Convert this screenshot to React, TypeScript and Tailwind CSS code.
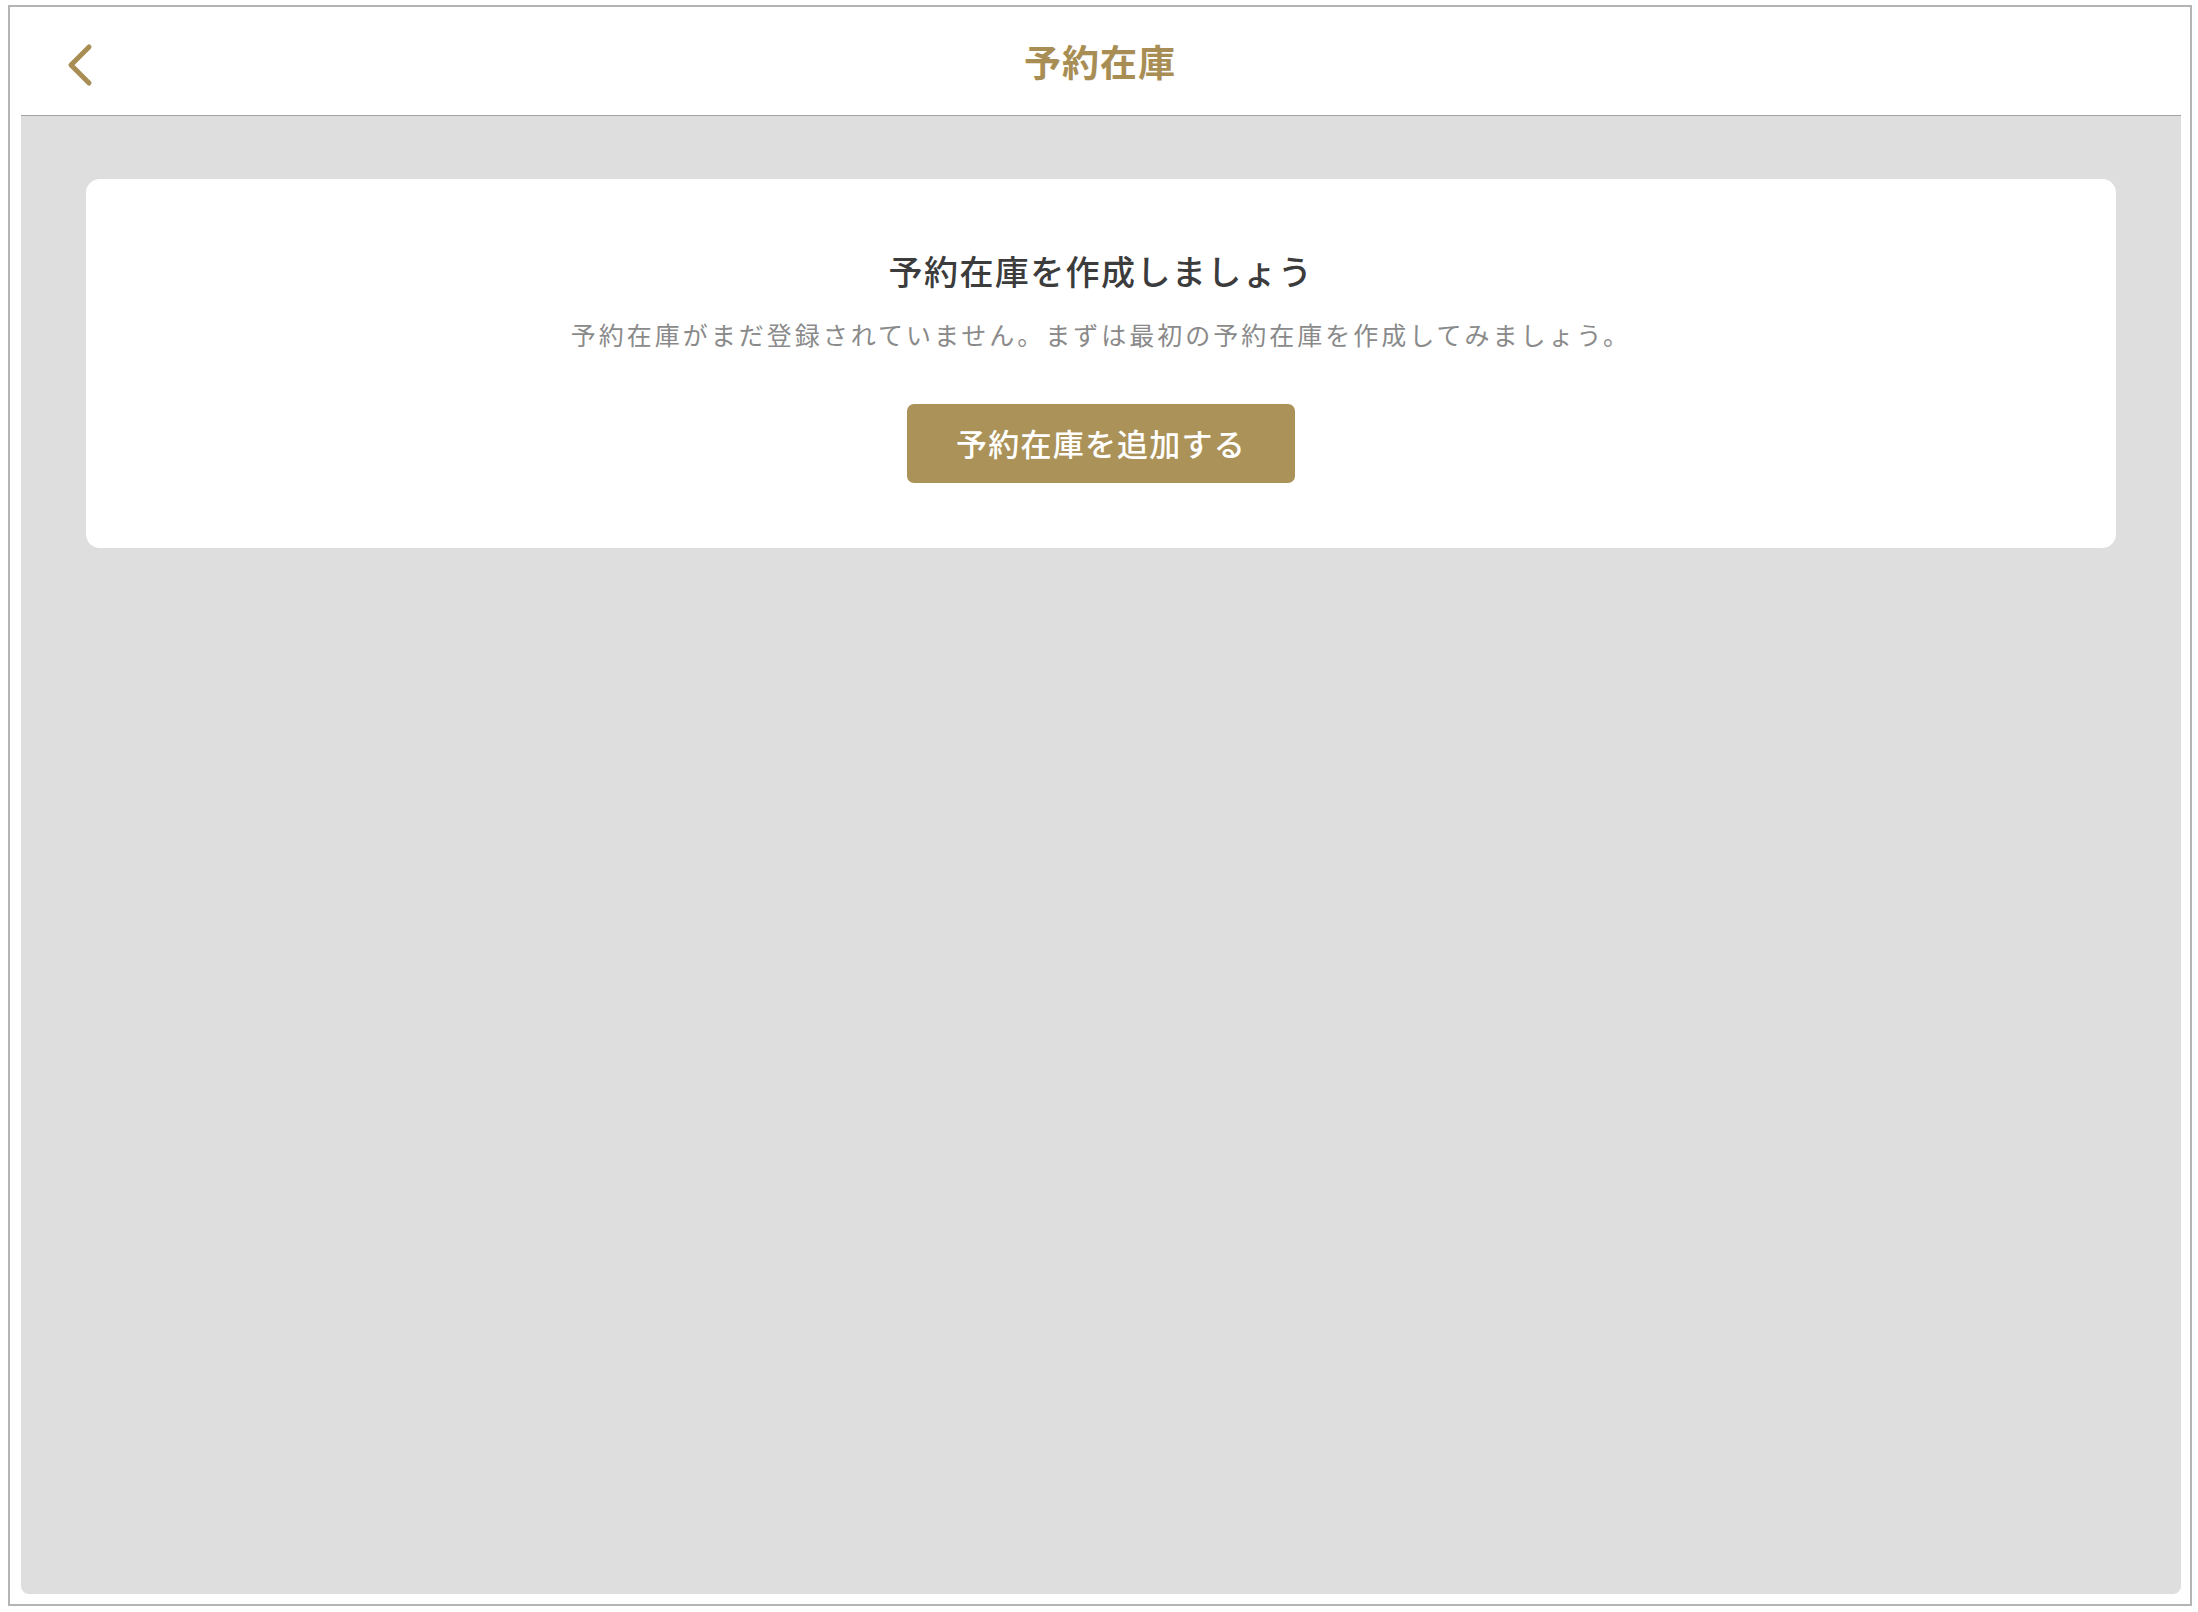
import React from "react";

const font = { fontFamily: '"Noto Sans CJK JP", "Noto Sans", sans-serif' };

export default function App() {
  return (
    <div className="w-[2198px] h-[1612px] bg-white pt-[5px] pl-[8px]" style={font}>
      <div className="w-[2184px] h-[1601px] border-2 border-[#b4b4b4] bg-white flex flex-col">
        {/* header */}
        <div className="relative h-[108px] shrink-0 flex items-center justify-center">
          <button className="absolute left-[55px] top-[36px] w-[30px] h-[44px] flex items-center justify-center">
            <svg width="30" height="44" viewBox="0 0 30 44" fill="none">
              <polyline
                points="24,4 6,22 24,40"
                stroke="#a88e55"
                strokeWidth="5"
                strokeLinecap="round"
                strokeLinejoin="round"
              />
            </svg>
          </button>
          <h1 className="text-[37px] font-bold text-[#a88e55] tracking-[1px] leading-none">予約在庫</h1>
        </div>
        {/* panel */}
        <div className="ml-[11px] mr-[9px] h-[1479px] shrink-0 border-t border-[#a3a3a3] bg-[#dedede] rounded-b-[8px] pt-[63px] px-[65px]">
          <div className="h-[369px] bg-white rounded-[14px] flex flex-col items-center pt-[66px]">
            <h2 className="text-[34px] leading-[51px] font-medium text-[#3c3c3c] tracking-[1.4px]">
              予約在庫を作成しましょう
            </h2>
            <p className="mt-[20px] text-[25px] leading-[36px] text-[#8a8a8a] tracking-[3px]">
              予約在庫がまだ登録されていません。まずは最初の予約在庫を作成してみましょう。
            </p>
            <button className="mt-[52px] w-[388px] h-[79px] rounded-[7px] bg-[#ab9259] text-white text-[31px] font-medium tracking-[1.2px] flex items-center justify-center">
              予約在庫を追加する
            </button>
          </div>
        </div>
      </div>
    </div>
  );
}
